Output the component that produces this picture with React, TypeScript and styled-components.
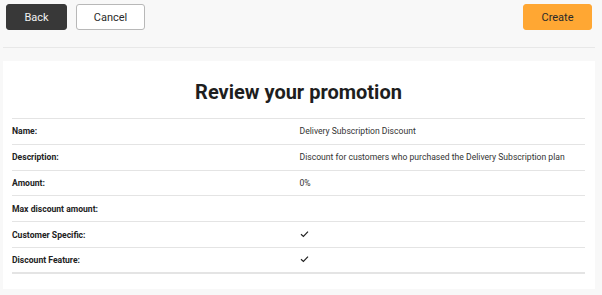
import React from "react";
import styled, { createGlobalStyle } from "styled-components";

const GlobalStyle = createGlobalStyle`
  html, body {
    margin: 0;
    padding: 0;
    background: #f8f8f8;
    font-family: Roboto, "Liberation Sans", sans-serif;
    color: #222;
  }
`;

const Page = styled.div`
  padding: 0 7px 0 3px;
`;

const Toolbar = styled.div`
  display: flex;
  align-items: flex-start;
  gap: 9px;
  padding: 4px 3px 0;
  height: 48px;
  box-sizing: border-box;
  border-bottom: 1px solid #e8e8e8;
`;

const Spacer = styled.div`
  flex: 1;
`;

const Button = styled.button<{ $variant: "dark" | "outline" | "accent" }>`
  height: 26px;
  padding: 0;
  border-radius: 3px;
  font-family: Roboto, "Liberation Sans", sans-serif;
  font-size: 11px;
  cursor: pointer;
  box-sizing: border-box;
  width: ${(p) => (p.$variant === "dark" ? "61px" : "69px")};
  background: ${(p) =>
    p.$variant === "dark" ? "#383838" : p.$variant === "accent" ? "#ffa733" : "#fff"};
  color: ${(p) => (p.$variant === "dark" ? "#f2f2f2" : "#2a2a2a")};
  border: 1px solid
    ${(p) => (p.$variant === "dark" ? "#383838" : p.$variant === "accent" ? "#ffa733" : "#b8b8b8")};
`;

const Card = styled.section`
  margin-top: 13px;
  background: #fff;
  padding: 0 10px 15px 9px;
`;

const Title = styled.h1`
  margin: 0;
  padding: 16px 0 11px;
  text-align: center;
  font-size: 20px;
  font-weight: 700;
  color: #1e1e1e;
  line-height: 30px;
`;

const Table = styled.div`
  border-top: 1px solid #e4e4e4;
`;

const Row = styled.div<{ $last?: boolean }>`
  display: grid;
  grid-template-columns: 1fr 1fr;
  align-items: center;
  height: 25.8px;
  box-sizing: border-box;
  border-bottom: ${(p) => (p.$last ? "2px" : "1px")} solid #e4e4e4;
  font-size: 8.6px;
`;

const Label = styled.div`
  font-weight: 700;
  color: #222;
`;

const Value = styled.div`
  color: #333;
  padding-left: 1px;
`;

const Check = () => (
  <svg width="9" height="8" viewBox="0 0 9 8">
    <path d="M1 4.2 L3.4 6.4 L8 1.6" fill="none" stroke="#222" strokeWidth="1.2" />
  </svg>
);

const rows: { label: string; value: React.ReactNode }[] = [
  { label: "Name:", value: "Delivery Subscription Discount" },
  {
    label: "Description:",
    value: "Discount for customers who purchased the Delivery Subscription plan",
  },
  { label: "Amount:", value: "0%" },
  { label: "Max discount amount:", value: "" },
  { label: "Customer Specific:", value: <Check /> },
  { label: "Discount Feature:", value: <Check /> },
];

export default function App() {
  return (
    <Page>
      <GlobalStyle />
      <Toolbar>
        <Button $variant="dark">Back</Button>
        <Button $variant="outline">Cancel</Button>
        <Spacer />
        <Button $variant="accent">Create</Button>
      </Toolbar>
      <Card>
        <Title>Review your promotion</Title>
        <Table>
          {rows.map((r, i) => (
            <Row key={r.label} $last={i === rows.length - 1}>
              <Label>{r.label}</Label>
              <Value>{r.value}</Value>
            </Row>
          ))}
        </Table>
      </Card>
    </Page>
  );
}
